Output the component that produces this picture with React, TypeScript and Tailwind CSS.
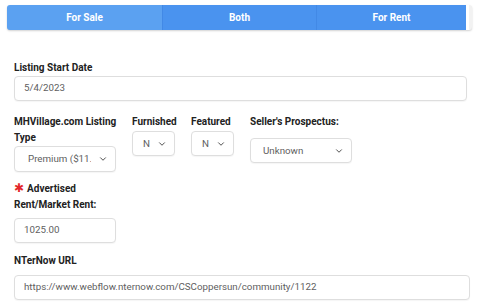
import { ChevronDown } from "lucide-react";

function Select({ value, className }: { value: string; className: string }) {
  return (
    <div
      className={`flex items-center h-[25px] border border-[#dedede] rounded-[4px] bg-white shadow-[0_1px_1px_rgba(0,0,0,0.04)] pr-[7px] ${className}`}
    >
      <span className="flex-1 overflow-hidden whitespace-nowrap text-[9.75px] text-[#606060] leading-none">{value}</span>
      <ChevronDown size={10} strokeWidth={2.25} className="text-[#444] shrink-0 ml-[7px]" />
    </div>
  );
}

function Input({ value, className }: { value: string; className: string }) {
  return (
    <div
      className={`flex items-center h-[25px] border border-[#dedede] rounded-[4px] bg-white shadow-[0_1px_1px_rgba(0,0,0,0.04)] px-[9px] text-[9.75px] text-[#606060] ${className}`}
    >
      {value}
    </div>
  );
}

export default function App() {
  return (
    <div className="w-[482px] h-[307px] bg-white overflow-hidden font-['Roboto',sans-serif]">
      {/* listing mode tabs */}
      <div className="ml-[7px] mt-[5px] w-[465px] h-[25px] flex rounded-[3px] bg-white border-r-[3px] border-[#f2f2f2] shadow-[0_1px_2px_rgba(0,0,0,0.18)] overflow-hidden">
        <button className="w-[155px] h-full bg-[#5ba1f1] text-white text-[10px] font-bold shadow-[0_2px_2px_rgba(0,0,0,0.25)]">
          For Sale
        </button>
        <button className="w-[154px] h-full bg-[#4a93ef] text-white text-[10px] font-bold border-l border-[#4289e6]">
          Both
        </button>
        <button className="w-[150px] h-full bg-[#4a93ef] text-white text-[10px] font-bold border-l border-[#4289e6]">
          For Rent
        </button>
      </div>

      <div className="pl-[14px] flex flex-col">
        <label className="mt-[30px] text-[10px] leading-4 font-bold text-[#222]">Listing Start Date</label>
        <Input value="5/4/2023" className="w-[453px]" />

        <div className="mt-[13px] flex items-start gap-[16px]">
          <div className="w-[102px] flex flex-col">
            <label className="text-[10px] leading-4 font-bold text-[#222] whitespace-nowrap">
              MHVillage.com Listing
              <br />
              Type
            </label>
            <Select value="Premium ($11.99)" className="w-[102px] h-[26px] pl-[13px]" />
          </div>
          <div className="w-[43px] flex flex-col">
            <label className="text-[10px] leading-4 font-bold text-[#222] whitespace-nowrap">Furnished</label>
            <Select value="No" className="mt-[1px] w-[43px] pl-[10px]" />
          </div>
          <div className="w-[43px] flex flex-col">
            <label className="text-[10px] leading-4 font-bold text-[#222] whitespace-nowrap">Featured</label>
            <Select value="No" className="mt-[1px] w-[43px] pl-[10px]" />
          </div>
          <div className="w-[102px] flex flex-col">
            <label className="text-[10px] leading-4 font-bold text-[#222] whitespace-nowrap">Seller's Prospectus:</label>
            <Select value="Unknown" className="mt-[8px] w-[102px] pl-[12px]" />
          </div>
        </div>

        <label className="mt-[9px] text-[10px] leading-4 font-bold text-[#222]">
          <span className="text-[#e3262a] text-[12px] leading-none font-['DejaVu_Sans',sans-serif] mr-[3px]">✱</span>
          Advertised
          <br />
          Rent/Market Rent:
        </label>
        <Input value="1025.00" className="mt-[5px] w-[102px]" />

        <label className="mt-[10px] text-[10px] leading-4 font-bold text-[#222]">NTerNow URL</label>
        <Input value="https://www.webflow.nternow.com/CSCoppersun/community/1122" className="mt-[6px] w-[456px]" />
      </div>
    </div>
  );
}
